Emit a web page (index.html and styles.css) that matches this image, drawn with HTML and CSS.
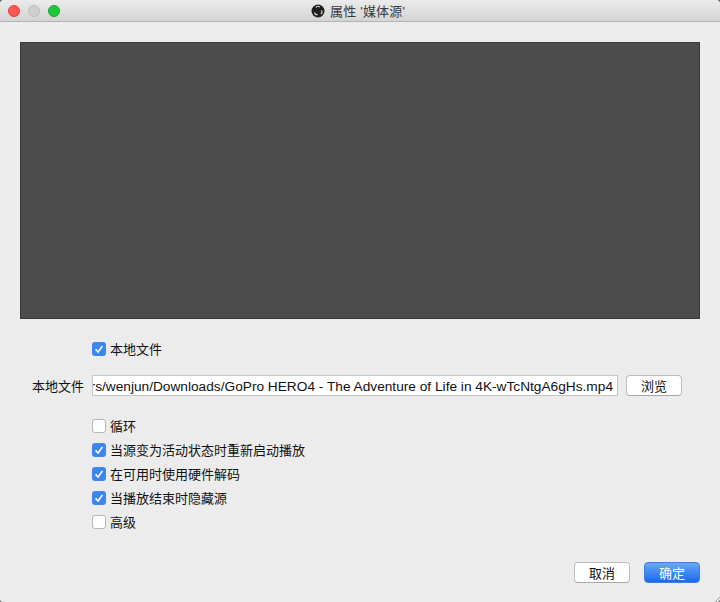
FILE: index.html
```html
<!DOCTYPE html>
<html lang="zh">
<head>
<meta charset="utf-8">
<title>属性</title>
<link rel="stylesheet" href="styles.css">
</head>
<body>
<div class="window">
  <header class="titlebar">
    <div class="lights">
      <span class="light red"></span>
      <span class="light gray"></span>
      <span class="light green"></span>
    </div>
    <div class="title">
      <svg class="obs" width="14" height="14" viewBox="0 0 14 14">
        <circle cx="7" cy="7" r="6.5" fill="#1e1e1e"/>
        <path d="M5 3.6a2 2 0 0 1 3.6-.4M10.2 6.5a2 2 0 0 1-.4 3.4M3.6 8.6a2 2 0 0 0 3 1.8" fill="none" stroke="#ddd" stroke-width="1.2"/>
      </svg>
      <span class="title-text">属性 '媒体源'</span>
    </div>
  </header>
  <main class="content">
    <div class="preview"></div>
    <div class="form">
      <div class="row check-row first">
        <span class="box on"><svg viewBox="0 0 14 14" width="14" height="14"><path d="M3.6 7.4l2.5 2.7 4.4-6.2" fill="none" stroke="#fff" stroke-width="1.6"/></svg></span>
        <span class="text">本地文件</span>
      </div>
      <div class="row file-row">
        <label class="file-label">本地文件</label>
        <div class="input"><span class="path">rs/wenjun/Downloads/GoPro HERO4 - The Adventure of Life in 4K-wTcNtgA6gHs.mp4</span></div>
        <button class="btn browse">浏览</button>
      </div>
      <div class="checks">
        <div class="row check-row"><span class="box"></span><span class="text">循环</span></div>
        <div class="row check-row"><span class="box on"><svg viewBox="0 0 14 14" width="14" height="14"><path d="M3.6 7.4l2.5 2.7 4.4-6.2" fill="none" stroke="#fff" stroke-width="1.6"/></svg></span><span class="text">当源变为活动状态时重新启动播放</span></div>
        <div class="row check-row"><span class="box on"><svg viewBox="0 0 14 14" width="14" height="14"><path d="M3.6 7.4l2.5 2.7 4.4-6.2" fill="none" stroke="#fff" stroke-width="1.6"/></svg></span><span class="text">在可用时使用硬件解码</span></div>
        <div class="row check-row"><span class="box on"><svg viewBox="0 0 14 14" width="14" height="14"><path d="M3.6 7.4l2.5 2.7 4.4-6.2" fill="none" stroke="#fff" stroke-width="1.6"/></svg></span><span class="text">当播放结束时隐藏源</span></div>
        <div class="row check-row"><span class="box"></span><span class="text">高级</span></div>
      </div>
    </div>
    <div class="actions">
      <button class="btn">取消</button>
      <button class="btn primary">确定</button>
    </div>
  </main>
  <svg class="grip" width="6" height="6" viewBox="0 0 6 6"><path d="M6 1L1 6M6 4L4 6" stroke="#a0a0a0" stroke-width="1" fill="none"/></svg>
</div>
</body>
</html>
```
FILE: styles.css
```css
* { box-sizing: border-box; }
html, body { margin: 0; padding: 0; }
body {
  width: 720px;
  height: 602px;
  overflow: hidden;
  background: #555;
  font-family: "Liberation Sans", "Noto Sans CJK SC", sans-serif;
  font-size: 13px;
  color: #111;
}
.window {
  width: 720px;
  height: 602px;
  display: flex;
  flex-direction: column;
  background: #ececec;
  border-radius: 4px 4px 3px 3px;
  overflow: hidden;
  position: relative;
}
.grip { position: absolute; right: 0; bottom: 0; display: block; }
.titlebar {
  height: 22px;
  flex: none;
  display: flex;
  align-items: center;
  background: linear-gradient(#ebebeb, #d4d4d4);
  border-bottom: 1px solid #b4b4b4;
  position: relative;
}
.lights { display: flex; gap: 8px; padding-left: 8px; }
.light { width: 12px; height: 12px; border-radius: 50%; display: block; }
.red { background: #fc5753; border: 1px solid #df3e3a; }
.gray { background: #cfcfcf; border: 1px solid #bcbcbc; }
.green { background: #1ec83c; border: 1px solid #14a82c; }
.title {
  position: absolute;
  left: 311px;
  top: 3px;
  display: flex;
  align-items: center;
  gap: 5px;
  height: 16px;
  color: #3a3a3a;
  font-size: 13px;
}
.title-text { padding-bottom: 2px; letter-spacing: 0.2px; }
.obs { display: block; }
.content { flex: 1; padding: 20px 20px 0; display: flex; flex-direction: column; }
.preview { height: 277px; flex: none; background: #4c4c4c; border: 1px solid #3a3a3a; }
.form { flex: 1; }
.row { display: flex; align-items: center; }
.check-row { height: 24px; gap: 4px; padding-left: 72px; }
.first { margin-top: 18px; }
.text { padding-bottom: 2px; }
.box {
  width: 14px;
  height: 14px;
  flex: none;
  border-radius: 3px;
  background: #fff;
  border: 1px solid #b5b5b5;
  display: block;
}
.box.on { background: #3b87ee; border: 0; }
.box svg { display: block; }
.file-row { margin-top: 14px; height: 21px; }
.file-label { width: 64px; flex: none; text-align: right; font-size: 13px; margin-right: 8px; }
.input {
  width: 526px;
  height: 21px;
  flex: none;
  background: #fff;
  border: 1px solid #c6c6c6;
  overflow: hidden;
  display: flex;
  justify-content: flex-end;
  align-items: center;
  padding-right: 4px;
  white-space: nowrap;
}
.path { font-family: "Liberation Sans", sans-serif; font-size: 13.7px; color: #111; flex: none; padding-top: 2px; }
.btn {
  width: 56px;
  height: 21px;
  padding: 0 0 4px;
  background: #fff;
  border: 1px solid #bcbcbc;
  border-bottom-color: #a8a8a8;
  border-radius: 4px;
  font: inherit;
  color: #111;
}
.browse { margin-left: 8px; }
.checks { margin-top: 18px; }
.actions { flex: none; display: flex; justify-content: flex-end; gap: 14px; padding-bottom: 19px; }
.primary {
  background: linear-gradient(#6aa8fa, #1a68ee);
  border-color: #3a7fe6;
  color: #fff;
}
```
